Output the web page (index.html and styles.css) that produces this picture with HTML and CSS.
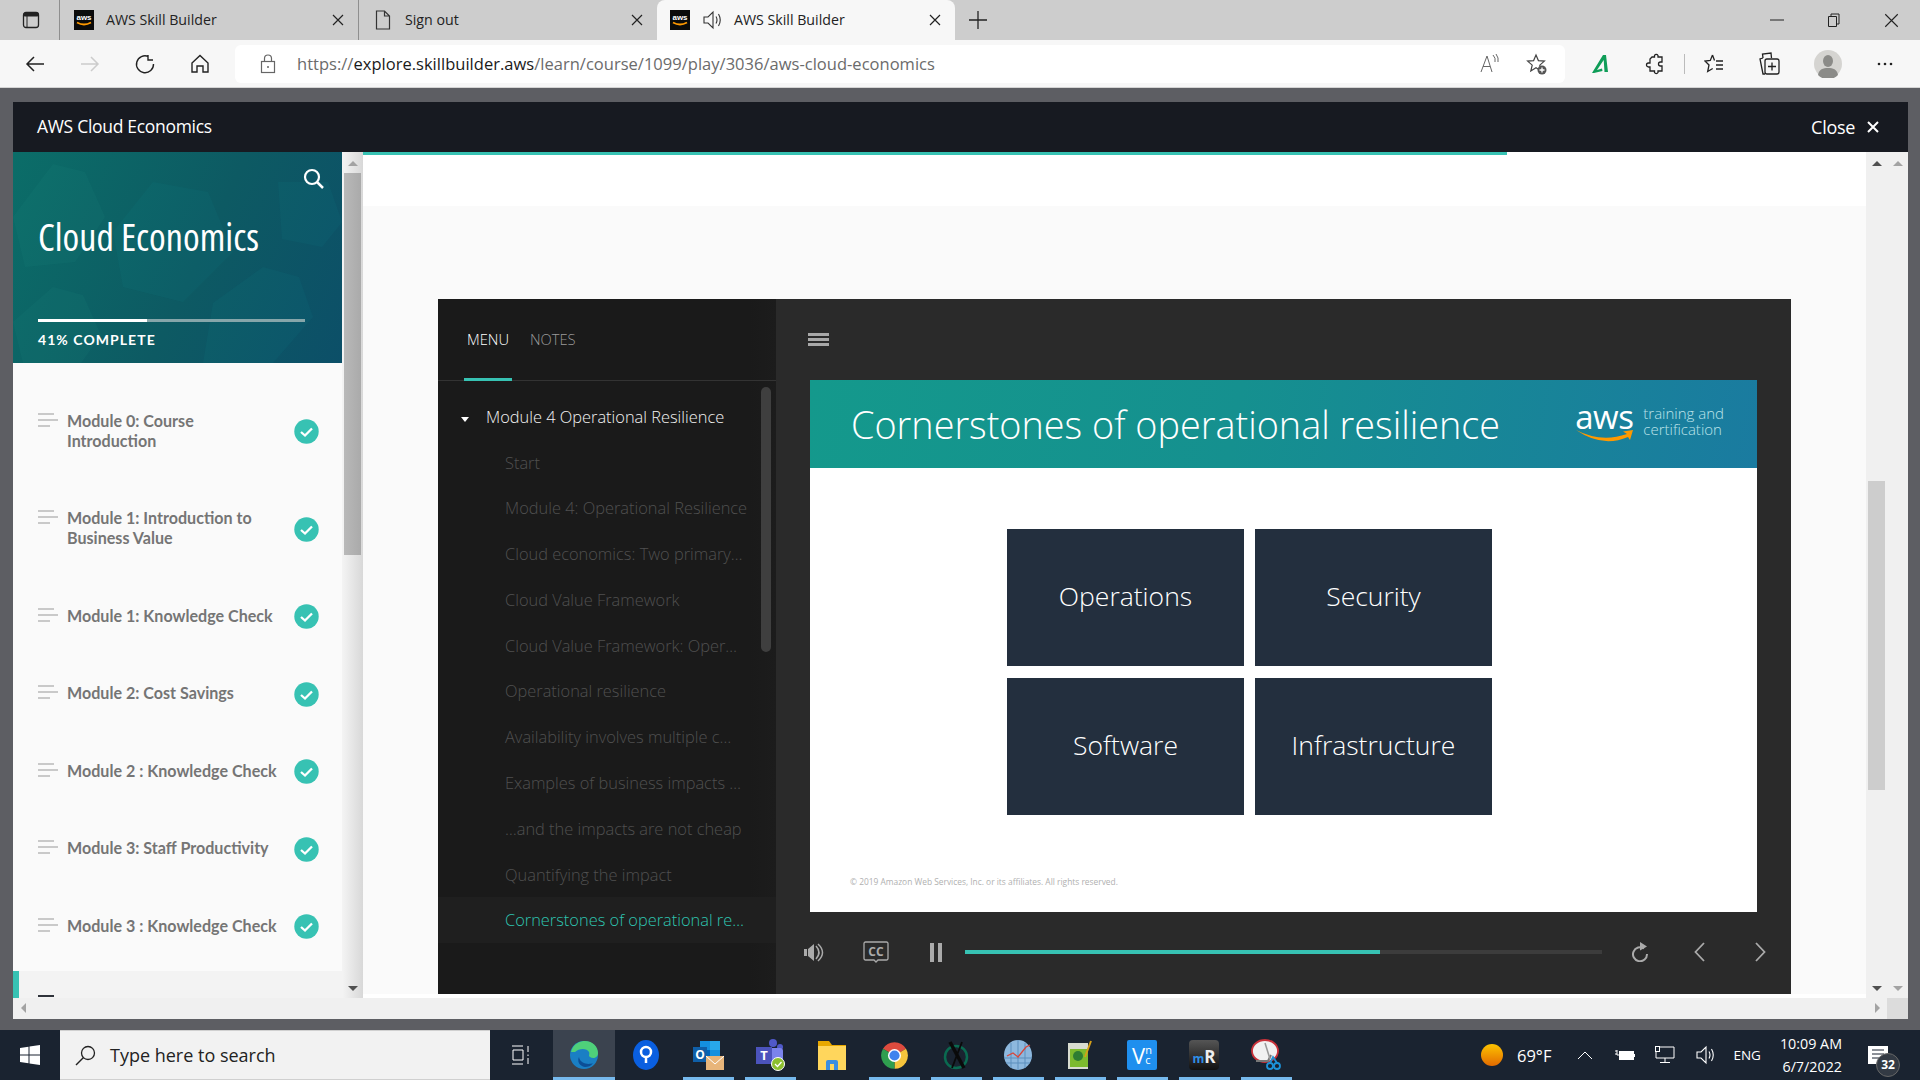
FILE: index.html
```html
<!DOCTYPE html>
<html lang="en">

<head>
    <meta charset="UTF-8">
    <title>AWS Skill Builder</title>
    <link rel="stylesheet" href="styles.css">
</head>

<body>
    <svg class="defs" width="0" height="0">
        <symbol id="close-x" viewBox="0 0 12 12">
            <path d="M1 1l10 10M11 1L1 11" fill="none" stroke="currentColor" />
        </symbol>
        <symbol id="check" viewBox="0 0 25 25">
            <circle cx="12.500" cy="12.500" r="12.200" fill="#37c2b3" />
            <path d="M7 13l4 3.500 7-7" fill="none" stroke="#fff" stroke-width="2.300" />
        </symbol>
        <symbol id="speaker-thin" viewBox="0 0 20 20">
            <path d="M2 7h4l5-5v16l-5-5H2z" fill="none" stroke="currentColor" stroke-width="1.100" />
            <path d="M14 6.500q2 3.500 0 7M16.500 4q3.500 6 0 12" fill="none" stroke="currentColor" stroke-width="1.100" />
        </symbol>
    </svg>

    <div class="tabstrip">
        <svg class="tab-pane-icon" width="18" height="18" viewBox="0 0 18 18">
            <rect x="1.500" y="1.500" width="15" height="15" rx="2.500" fill="none" stroke="#222" stroke-width="1.300" />
            <rect x="1.500" y="1.500" width="15" height="4" rx="1.500" fill="#222" />
            <path d="M5 5v11" stroke="#222" stroke-width="1" />
        </svg>
        <div class="tab">
            <svg class="fav" width="20" height="20" viewBox="0 0 20 20">
                <rect width="20" height="20" fill="#0b0b0b" />
                <text x="10" y="10" font-size="8" font-weight="700" fill="#fff" text-anchor="middle" font-family="Liberation Sans">aws</text>
                <path d="M3 12.500q7 4 14 0" fill="none" stroke="#f90" stroke-width="1.800" />
            </svg>
            <span class="tab-title">AWS Skill Builder</span>
            <svg class="tab-close" width="12" height="12" stroke-width="1.200"><use href="#close-x" /></svg>
        </div>
        <div class="tab">
            <svg class="fav" width="20" height="20" viewBox="0 0 20 20">
                <path d="M3.500 1h8l5 5v13h-13zM11.500 1v5h5" fill="none" stroke="#333" stroke-width="1.200" />
            </svg>
            <span class="tab-title">Sign out</span>
            <svg class="tab-close" width="12" height="12" stroke-width="1.200"><use href="#close-x" /></svg>
        </div>
        <div class="tab tab-active">
            <svg class="fav" width="20" height="20" viewBox="0 0 20 20">
                <rect width="20" height="20" fill="#0b0b0b" />
                <text x="10" y="10" font-size="8" font-weight="700" fill="#fff" text-anchor="middle" font-family="Liberation Sans">aws</text>
                <path d="M3 12.500q7 4 14 0" fill="none" stroke="#f90" stroke-width="1.800" />
            </svg>
            <svg class="tab-sound" width="20" height="20"><use href="#speaker-thin" /></svg>
            <span class="tab-title">AWS Skill Builder</span>
            <svg class="tab-close" width="12" height="12" stroke-width="1.200"><use href="#close-x" /></svg>
        </div>
        <svg class="tab-new" width="18" height="18" viewBox="0 0 18 18">
            <path d="M9 0v18M0 9h18" stroke="#222" stroke-width="1.300" />
        </svg>
        <div class="win-controls">
            <svg width="14" height="14" viewBox="0 0 14 14"><path d="M0 7h14" stroke="#222" stroke-width="1" /></svg>
            <svg width="14" height="14" viewBox="0 0 14 14">
                <path d="M1.500 3.500h8v10h-8zM4 3.500V1h8v10H9.500" fill="none" stroke="#222" stroke-width="1" />
            </svg>
            <svg width="15" height="15" stroke-width="0.900"><use href="#close-x" /></svg>
        </div>
    </div>

    <div class="toolbar">
        <svg class="nav-icon" width="20" height="20" viewBox="0 0 20 20">
            <path d="M19 10H2M9 3l-7 7 7 7" fill="none" stroke="#222" stroke-width="1.500" />
        </svg>
        <svg class="nav-icon" width="20" height="20" viewBox="0 0 20 20">
            <path d="M1 10h17M11 3l7 7-7 7" fill="none" stroke="#ccc" stroke-width="1.500" />
        </svg>
        <svg class="nav-icon" width="20" height="20" viewBox="0 0 20 20">
            <path d="M13.500 2.500A8.500 8.500 0 1 0 18.500 10M13 1v5h5" fill="none" stroke="#222" stroke-width="1.400" />
        </svg>
        <svg class="nav-icon" width="20" height="20" viewBox="0 0 20 20">
            <path d="M2 9l8-7.500L18 9v9h-5v-6H7v6H2z" fill="none" stroke="#222" stroke-width="1.400" />
        </svg>
        <div class="address">
            <svg class="lock" width="16" height="20" viewBox="0 0 16 20">
                <rect x="1.500" y="7.500" width="13" height="11" fill="none" stroke="#666" stroke-width="1.200" />
                <path d="M4.500 7.500V4.500a3.500 3.500 0 0 1 7 0v3" fill="none" stroke="#666" stroke-width="1.200" />
                <circle cx="8" cy="13" r="1" fill="#666" />
            </svg>
            <span class="url"><span class="url-dim">https://</span>explore.skillbuilder.aws<span class="url-dim">/learn/course/1099/play/3036/aws-cloud-economics</span></span>
            <svg class="addr-icon" width="20" height="22" viewBox="0 0 20 22">
                <path d="M1 19L7 3l5 16M3 13.500h7" fill="none" stroke="#666" stroke-width="1" />
                <path d="M13 2q3 3 2 7M16 1q3 4 2 8" fill="none" stroke="#666" stroke-width="1" />
            </svg>
            <svg class="addr-icon" width="22" height="22" viewBox="0 0 22 22">
                <path d="M10 2l2.400 5.600 6 .5-4.600 4 1.400 5.900-5.200-3.200L4.800 18l1.400-5.900-4.600-4 6-.5z" fill="none" stroke="#444" stroke-width="1.200" />
                <circle cx="16" cy="17" r="4.500" fill="#555" />
                <path d="M16 14.500v5M13.500 17h5" stroke="#fff" stroke-width="1.300" />
            </svg>
        </div>
        <div class="tool-icons">
            <svg width="20" height="20" viewBox="0 0 20 20">
                <path d="M1 19L12 1h3l2 17h-3.500l-.8-12L6 16l5-1.500 .5 2.500L3 19z" fill="#0f9d58" />
            </svg>
            <svg width="20" height="22" viewBox="0 0 20 22">
                <path d="M7 4h2.500V2.500a2 2 0 0 1 3.500 0V4h4v5h-1.500a2 2 0 0 0 0 4H17v5h-4v1.500a2 2 0 0 1-3.500 0V18H5v-4H3.500a2 2 0 0 1 0-4H5V6z" fill="none" stroke="#222" stroke-width="1.300" />
            </svg>
            <span class="tool-sep"></span>
            <svg width="20" height="22" viewBox="0 0 20 22">
                <path d="M8.500 2L6.300 7.500 1 8l4 4-1.300 6.500 5-3M8.500 2l2 5.500" fill="none" stroke="#222" stroke-width="1.300" />
                <path d="M12 8h7M12 12h7M12 16h7" stroke="#222" stroke-width="1.300" />
            </svg>
            <svg width="22" height="24" viewBox="0 0 22 24">
                <path d="M5 6L4.500 2 13 1l.5 5" fill="none" stroke="#222" stroke-width="1.300" />
                <path d="M5 6L2 7l3 15h2" fill="none" stroke="#222" stroke-width="1.300" />
                <rect x="7" y="7" width="14" height="15" rx="2" fill="none" stroke="#222" stroke-width="1.300" />
                <path d="M14 10.500v8M10 14.500h8" stroke="#222" stroke-width="1.300" />
            </svg>
            <svg width="28" height="28" viewBox="0 0 28 28">
                <circle cx="14" cy="14" r="14" fill="#d5d4d1" />
                <ellipse cx="14" cy="11" rx="5" ry="6" fill="#8b8b88" />
                <path d="M4 25c1-6 5-7 10-7s9 1 10 7a14 14 0 0 1-20 0z" fill="#8b8b88" />
            </svg>
            <svg width="18" height="4" viewBox="0 0 18 4">
                <circle cx="3" cy="2" r="1.300" fill="#222" />
                <circle cx="9" cy="2" r="1.300" fill="#222" />
                <circle cx="15" cy="2" r="1.300" fill="#222" />
            </svg>
        </div>
    </div>

    <div class="desktop">
        <div class="frame">
            <div class="frame-head">
                <span>AWS Cloud Economics</span>
                <span class="frame-close">Close
                    <svg width="12" height="12" stroke-width="2"><use href="#close-x" /></svg>
                </span>
            </div>

            <div class="frame-body">
                <div class="course-side">
                    <div class="course-head">
                        <svg class="hex-bg" width="329" height="211" viewBox="0 0 329 211">
                            <g fill="#1a8a7c" fill-opacity="0.14">
                                <path d="M40 12l32 8 20 45-30 45-50 5-12-50z" />
                                <path d="M40 135l30 8 18 40-20 28H10L0 170z" />
                            </g>
                            <g fill="#148a98" fill-opacity="0.1">
                                <path d="M140 30l55 10 25 60-50 50-60-15-10-55z" />
                                <path d="M250 115l36 10 14 40-40 46h-70l10-60z" />
                                <path d="M265 30l50 0 14 40-20 25-40-8z" />
                            </g>
                        </svg>
                        <svg class="course-search" width="21" height="21" viewBox="0 0 21 21">
                            <circle cx="9" cy="9" r="7" fill="none" stroke="#fff" stroke-width="2.200" />
                            <path d="M14 14l6 6" stroke="#fff" stroke-width="2.500" />
                        </svg>
                        <h1 class="course-title">Cloud Economics</h1>
                        <div class="course-bar"><div class="course-bar-fill"></div></div>
                        <div class="course-pct">41% COMPLETE</div>
                    </div>

                    <ul class="modules">
                        <li class="module">
                            <span class="bars"><i></i><i></i><i></i></span>
                            <span class="module-name">Module 0: Course Introduction</span>
                            <svg class="check" width="25" height="25"><use href="#check" /></svg>
                        </li>
                        <li class="module">
                            <span class="bars"><i></i><i></i><i></i></span>
                            <span class="module-name">Module 1: Introduction to Business Value</span>
                            <svg class="check" width="25" height="25"><use href="#check" /></svg>
                        </li>
                        <li class="module">
                            <span class="bars"><i></i><i></i><i></i></span>
                            <span class="module-name">Module 1: Knowledge Check</span>
                            <svg class="check" width="25" height="25"><use href="#check" /></svg>
                        </li>
                        <li class="module">
                            <span class="bars"><i></i><i></i><i></i></span>
                            <span class="module-name">Module 2: Cost Savings</span>
                            <svg class="check" width="25" height="25"><use href="#check" /></svg>
                        </li>
                        <li class="module">
                            <span class="bars"><i></i><i></i><i></i></span>
                            <span class="module-name">Module 2 : Knowledge Check</span>
                            <svg class="check" width="25" height="25"><use href="#check" /></svg>
                        </li>
                        <li class="module">
                            <span class="bars"><i></i><i></i><i></i></span>
                            <span class="module-name">Module 3: Staff Productivity</span>
                            <svg class="check" width="25" height="25"><use href="#check" /></svg>
                        </li>
                        <li class="module">
                            <span class="bars"><i></i><i></i><i></i></span>
                            <span class="module-name">Module 3 : Knowledge Check</span>
                            <svg class="check" width="25" height="25"><use href="#check" /></svg>
                        </li>
                        <li class="module module-current">
                            <span class="bars bars-dark"><i></i></span>
                        </li>
                    </ul>
                </div>

                <div class="vscroll side-scroll">
                    <span class="arrow-up"></span>
                    <div class="side-thumb"></div>
                    <span class="arrow-down arrow-dark"></span>
                </div>

                <div class="main">
                    <div class="lesson-progress"><div class="lesson-progress-fill"></div></div>
                    <div class="main-band"></div>
                    <div class="stage">
                        <div class="player">
                            <div class="player-side">
                                <div class="player-tabs">
                                    <span class="player-tab player-tab-on">MENU</span>
                                    <span class="player-tab">NOTES</span>
                                </div>
                                <div class="outline">
                                    <div class="outline-thumb"></div>
                                    <div class="outline-head"><span class="caret"></span>Module 4 Operational Resilience</div>
                                    <div class="outline-item">Start</div>
                                    <div class="outline-item">Module 4: Operational Resilience</div>
                                    <div class="outline-item">Cloud economics: Two primary…</div>
                                    <div class="outline-item">Cloud Value Framework</div>
                                    <div class="outline-item">Cloud Value Framework: Oper…</div>
                                    <div class="outline-item">Operational resilience</div>
                                    <div class="outline-item">Availability involves multiple c…</div>
                                    <div class="outline-item">Examples of business impacts …</div>
                                    <div class="outline-item">…and the impacts are not cheap</div>
                                    <div class="outline-item">Quantifying the impact</div>
                                    <div class="outline-item outline-item-on">Cornerstones of operational re…</div>
                                </div>
                            </div>

                            <div class="player-main">
                                <div class="player-top">
                                    <div class="hamburger"><i></i><i></i><i></i></div>
                                </div>
                                <div class="slide">
                                    <div class="slide-head">
                                        <h2 class="slide-title">Cornerstones of operational resilience</h2>
                                        <div class="aws-logo">
                                            <div class="aws-mark">
                                                <span class="aws-word">aws</span>
                                                <svg class="aws-swoosh" width="58" height="14" viewBox="0 0 58 14">
                                                    <path d="M1 1Q26 14 52 5L48 2.500 58 1 55 11 53 8Q27 19 1 1z" fill="#f90" />
                                                </svg>
                                            </div>
                                            <div class="aws-tag">training and<br>certification</div>
                                        </div>
                                    </div>
                                    <div class="slide-body">
                                        <div class="corner-grid">
                                            <div class="corner">Operations</div>
                                            <div class="corner">Security</div>
                                            <div class="corner">Software</div>
                                            <div class="corner">Infrastructure</div>
                                        </div>
                                        <div class="slide-legal">© 2019 Amazon Web Services, Inc. or its affiliates. All rights reserved.</div>
                                    </div>
                                </div>
                                <div class="controls">
                                    <svg class="ctl-sound" width="21" height="21" viewBox="0 0 21 21">
                                        <path d="M0 7h3v7H0zM4 7l6-5v17l-6-5z" fill="#aaa" />
                                        <path d="M12 4q6 6.500 0 13M14 2q9 8.500 0 17" fill="none" stroke="#aaa" stroke-width="1.500" />
                                    </svg>
                                    <svg class="ctl-cc" width="26" height="22" viewBox="0 0 26 22">
                                        <path d="M2.500 1h21a1.500 1.500 0 0 1 1.500 1.500v15a1.500 1.500 0 0 1-1.500 1.500H15l-2 2-2-2H2.500A1.500 1.500 0 0 1 1 17.500v-15A1.500 1.500 0 0 1 2.500 1z" fill="none" stroke="#aaa" stroke-width="1.300" />
                                        <text x="13" y="15" font-size="12" font-weight="700" fill="#aaa" text-anchor="middle" font-family="Open Sans">CC</text>
                                    </svg>
                                    <svg class="ctl-pause" width="12" height="19" viewBox="0 0 12 19">
                                        <path d="M0 0h4v19H0zM8 0h4v19H8z" fill="#aaa" />
                                    </svg>
                                    <div class="seek"><div class="seek-fill"></div></div>
                                    <svg class="ctl-replay" width="18" height="20" viewBox="0 0 18 20">
                                        <path d="M13 6.500A7 7 0 1 0 16 12" fill="none" stroke="#aaa" stroke-width="2" />
                                        <path d="M9 0l7 4.500-7 4z" fill="#aaa" />
                                    </svg>
                                    <svg class="ctl-prev" width="11" height="20" viewBox="0 0 11 20">
                                        <path d="M10 1L1.500 10l8.500 9" fill="none" stroke="#aaa" stroke-width="1.800" />
                                    </svg>
                                    <svg class="ctl-next" width="11" height="20" viewBox="0 0 11 20">
                                        <path d="M1 1l8.500 9L1 19" fill="none" stroke="#aaa" stroke-width="1.800" />
                                    </svg>
                                </div>
                            </div>
                        </div>
                    </div>
                    <div class="main-foot"></div>
                </div>

                <div class="vscroll main-scroll">
                    <span class="arrow-up arrow-dark"></span>
                    <div class="main-thumb"></div>
                    <span class="arrow-down arrow-dark"></span>
                </div>
                <div class="vscroll outer-scroll">
                    <span class="arrow-up"></span>
                    <span class="arrow-down"></span>
                </div>
            </div>

            <div class="hscroll">
                <span class="arrow-left"></span>
                <span class="arrow-right"></span>
                <span class="hscroll-corner"></span>
            </div>
        </div>
    </div>

    <div class="taskbar">
        <div class="start">
            <svg width="20" height="20" viewBox="0 0 20 20">
                <path d="M0 3l8.500-1.300V9.500H0zM9.500 1.500L20 0v9.500H9.500zM0 10.500h8.500v7.800L0 17zM9.500 10.500H20V20L9.500 18.500z" fill="#fff" />
            </svg>
        </div>
        <div class="search">
            <svg width="21" height="21" viewBox="0 0 21 21">
                <circle cx="13" cy="8" r="6.500" fill="none" stroke="#222" stroke-width="1.300" />
                <path d="M8.500 12.500L1 20" stroke="#222" stroke-width="1.500" />
            </svg>
            <span>Type here to search</span>
        </div>
        <div class="slot slot-view">
            <svg width="20" height="20" viewBox="0 0 20 20">
                <path d="M1 1h11M1 19h11M2 5h10v10H2zM17 1v6M17 9.500v1.500M17 13v6" fill="none" stroke="#fff" stroke-width="1" />
            </svg>
        </div>
        <div class="slot slot-active">
            <svg width="30" height="30" viewBox="0 0 30 30">
                <circle cx="15" cy="15" r="14" fill="#1a7fc4" />
                <path d="M2 12C4 3 12 1 16 1c8 0 13 6 13 12 0 5-5 6-8 4-2-1 0-3-1-5-2-4-10-4-14 0z" fill="#4fd07a" />
                <path d="M16 27c-6-1-8-6-6-10 1 7 10 8 14 6-2 3-5 4-8 4z" fill="#0c4e96" />
            </svg>
        </div>
        <div class="slot">
            <svg width="26" height="30" viewBox="0 0 26 30">
                <ellipse cx="13" cy="15" rx="13" ry="15" fill="#0a5fe0" />
                <circle cx="13" cy="12" r="5" fill="none" stroke="#fff" stroke-width="2.500" />
                <path d="M13 16v7" stroke="#fff" stroke-width="2.500" />
            </svg>
        </div>
        <div class="slot slot-open">
            <svg width="32" height="32" viewBox="0 0 32 32">
                <rect x="8" y="2" width="20" height="18" fill="#1490df" />
                <rect x="18" y="2" width="10" height="9" fill="#28a8ea" />
                <rect x="8" y="11" width="10" height="9" fill="#0364b8" />
                <rect x="1" y="8" width="14" height="15" fill="#0f5fa8" />
                <text x="8" y="20" font-size="12" font-weight="700" fill="#fff" text-anchor="middle" font-family="Open Sans">O</text>
                <rect x="14" y="17" width="18" height="14" fill="#e8b57a" />
                <path d="M14 17l9 8 9-8" fill="none" stroke="#fff" stroke-width="1" />
            </svg>
        </div>
        <div class="slot slot-open">
            <svg width="32" height="32" viewBox="0 0 32 32">
                <circle cx="19" cy="4" r="4" fill="#5059c9" />
                <circle cx="26" cy="8" r="3" fill="#5059c9" />
                <rect x="14" y="9" width="15" height="14" rx="3" fill="#7b83eb" />
                <rect x="2" y="8" width="16" height="17" fill="#4b53bc" />
                <text x="10" y="21" font-size="13" font-weight="700" fill="#fff" text-anchor="middle" font-family="Open Sans">T</text>
                <circle cx="24" cy="25" r="6.500" fill="#8cbf2f" stroke="#fff" />
                <path d="M21 25l2.500 2.500 4-4.500" fill="none" stroke="#fff" stroke-width="1.300" />
            </svg>
        </div>
        <div class="slot">
            <svg width="28" height="30" viewBox="0 0 28 30">
                <path d="M0 1h11l3 4h14v25H0z" fill="#e8a800" />
                <path d="M0 6h28v24H0z" fill="#ffd65c" />
                <path d="M8 30v-8a2 2 0 0 1 2-2h8a2 2 0 0 1 2 2v8h-4v-6h-4v6z" fill="#3a8ee0" />
            </svg>
        </div>
        <div class="slot slot-open">
            <svg width="29" height="29" viewBox="0 0 24 24">
                <path d="M12 12L2.470 6.500A11 11 0 0 1 21.530 6.500z" fill="#dd4b3e" />
                <path d="M12 12l9.530-5.500A11 11 0 0 1 12 23z" fill="#f6c43c" />
                <path d="M12 12v11A11 11 0 0 1 2.470 6.500z" fill="#2f9e4f" />
                <circle cx="12" cy="12" r="5.400" fill="#fff" />
                <circle cx="12" cy="12" r="4.200" fill="#3f82ee" />
            </svg>
        </div>
        <div class="slot slot-open">
            <svg width="30" height="30" viewBox="0 0 30 30">
                <circle cx="15" cy="17" r="11" fill="none" stroke="#0a6a50" stroke-width="2.500" />
                <path d="M9 2l14 26" stroke="#0a0a0a" stroke-width="3.500" />
                <path d="M21 2L11 28" stroke="#0a0a0a" stroke-width="1.800" />
            </svg>
        </div>
        <div class="slot slot-open">
            <svg width="30" height="32" viewBox="0 0 30 32">
                <ellipse cx="15" cy="16" rx="14" ry="15" fill="#8db8de" />
                <path d="M1 19h28M3 24h24M8 4v25M15 1v30M22 4v25" stroke="#5d8fbd" stroke-width="1" />
                <path d="M4 17l6-3 5 4 8-10 4-2" fill="none" stroke="#d8453a" stroke-width="1.300" />
            </svg>
        </div>
        <div class="slot slot-open">
            <svg width="28" height="32" viewBox="0 0 28 32">
                <rect x="2" y="4" width="20" height="26" fill="#d8dcd0" />
                <rect x="4" y="10" width="18" height="18" fill="#7cba2e" />
                <circle cx="12" cy="17" r="5" fill="#2e7d32" />
                <path d="M25 2l-6 16" stroke="#d6a018" stroke-width="2" />
            </svg>
        </div>
        <div class="slot slot-open">
            <div class="vnc-tile">V<span class="vnc-small">n<br>c</span></div>
        </div>
        <div class="slot slot-open">
            <div class="r-tile"><span class="r-m">m</span>R</div>
        </div>
        <div class="slot slot-open">
            <svg width="30" height="32" viewBox="0 0 30 32">
                <ellipse cx="14" cy="12" rx="13" ry="11" fill="#f1f1f1" stroke="#c9323a" stroke-width="1.800" />
                <path d="M5 22h12l3-6" fill="none" stroke="#777" stroke-width="2" />
                <path d="M14 4l5 16" stroke="#999" stroke-width="1.500" />
                <circle cx="19" cy="27" r="3" fill="none" stroke="#1d93d8" stroke-width="1.800" />
                <circle cx="26" cy="27" r="3" fill="none" stroke="#1d93d8" stroke-width="1.800" />
                <path d="M19 24l3-6 4 6" fill="none" stroke="#1d93d8" stroke-width="1.800" />
            </svg>
        </div>

        <div class="tray">
            <span class="sun"></span>
            <span class="temp">69°F</span>
            <svg class="tray-chevron" width="16" height="9" viewBox="0 0 16 9">
                <path d="M1 8l7-7 7 7" fill="none" stroke="#fff" stroke-width="1" />
            </svg>
            <svg class="tray-battery" width="20" height="12" viewBox="0 0 20 12">
                <path d="M0 2h2M0 5h2M2 1v5h3" fill="none" stroke="#fff" stroke-width="1" />
                <rect x="4.500" y="2.500" width="14" height="8" fill="#fff" stroke="#fff" />
                <path d="M19 5v3" stroke="#fff" stroke-width="2" />
            </svg>
            <svg class="tray-net" width="20" height="18" viewBox="0 0 20 18">
                <path d="M4 1h15v11H1M10 12v4M5 16.500h10M1 1v11" fill="none" stroke="#fff" stroke-width="1" />
                <rect x="0.500" y="0.500" width="4" height="5" fill="#1a2330" stroke="#fff" />
            </svg>
            <svg class="tray-sound" width="20" height="20"><use href="#speaker-thin" /></svg>
            <span class="tray-lang">ENG</span>
            <div class="clock">10:09 AM<br>6/7/2022</div>
            <div class="notify">
                <svg width="20" height="18" viewBox="0 0 20 18">
                    <path d="M0 0h20v18H0z" fill="#fff" />
                    <path d="M4 4h12M4 8h12M4 12h8" stroke="#1a2330" stroke-width="1" />
                </svg>
                <span class="notify-count">32</span>
            </div>
        </div>
    </div>
</body>

</html>
```

FILE: styles.css
```css
* {
    box-sizing: border-box;
}

html,
body {
    margin: 0;
    height: 1080px;
    overflow: hidden;
}

body {
    display: flex;
    flex-direction: column;
    width: 1920px;
    font-family: "Open Sans", sans-serif;
    background-color: #5d5e63;
}

svg {
    display: block;
    flex: none;
}

.defs {
    position: absolute;
}

ul {
    list-style: none;
    margin: 0;
    padding: 0;
}

/* browser chrome */
.tabstrip {
    display: flex;
    align-items: center;
    height: 40px;
    padding-left: 22px;
    background-color: #cdcdcd;
    color: #222;
}

.tab-pane-icon {
    margin-right: 19px;
}

.tab {
    display: flex;
    align-items: center;
    width: 299px;
    height: 40px;
    padding: 0 14px;
    border-left: 1px solid #8f8f8f;
    font-size: 14.200px;
}

.tab-active {
    width: 298px;
    padding: 0 14px 0 13px;
    border-left: none;
    border-radius: 8px 8px 0 0;
    background-color: #f7f7f7;
}

.fav {
    margin-right: 12px;
}

.tab-sound {
    margin-right: 12px;
    color: #333;
}

.tab-title {
    flex: 1;
    padding-bottom: 2px;
}

.tab-close {
    color: #222;
}

.tab-new {
    margin-left: 14px;
}

.win-controls {
    display: flex;
    align-items: center;
    gap: 43px;
    margin-left: auto;
    padding-right: 21px;
    color: #222;
}

.toolbar {
    display: flex;
    align-items: center;
    height: 48px;
    padding-left: 25px;
    background-color: #f7f7f7;
    border-bottom: 1px solid #d4d4d4;
}

.nav-icon {
    margin-right: 35px;
}

.address {
    display: flex;
    align-items: center;
    width: 1330px;
    height: 38px;
    margin-left: -10px;
    padding-left: 25px;
    border-radius: 6px;
    background-color: #fff;
}

.url {
    flex: 1;
    margin-left: 21px;
    font-size: 16.500px;
    letter-spacing: 0.02px;
    color: #1a1a1a;
}

.url-dim {
    color: #6b6b6b;
}

.addr-icon {
    margin-right: 26px;
}

.addr-icon:last-child {
    margin-right: 17px;
}

.tool-icons {
    display: flex;
    align-items: center;
    margin-left: 26px;
    gap: 34px;
}

.tool-sep {
    width: 1px;
    height: 20px;
    margin: 0 -15px;
    background-color: #bbb;
}

/* course window */
.desktop {
    flex: 1;
    min-height: 0;
    padding: 14px 12px 11px 13px;
}

.frame {
    display: flex;
    flex-direction: column;
    height: 100%;
    background-color: #fafafa;
}

.frame-head {
    display: flex;
    align-items: center;
    justify-content: space-between;
    height: 50px;
    padding: 0 29px 3px 24px;
    background-color: #171a21;
    color: #fff;
    font-size: 17.500px;
    letter-spacing: -0.3px;
}

.frame-close {
    display: flex;
    align-items: center;
    gap: 12px;
    font-size: 18px;
    margin-top: 3px;
}

.frame-body {
    flex: 1;
    display: flex;
    min-height: 0;
}

.course-side {
    width: 329px;
    overflow: hidden;
    background-color: #fafafa;
}

.course-head {
    position: relative;
    height: 211px;
    padding: 63px 37px 0 25px;
    overflow: hidden;
    background: linear-gradient(115deg, #0b6d68 0%, #0d5a63 55%, #0c4f68 100%);
    color: #fff;
}

.hex-bg {
    position: absolute;
    left: 0;
    top: 0;
}

.course-search {
    position: absolute;
    left: 290px;
    top: 16px;
}

.course-title {
    position: relative;
    margin: 0;
    font-size: 38px;
    font-stretch: 75%;
    line-height: 42px;
    font-weight: 500;
    white-space: nowrap;
}

.course-bar {
    position: relative;
    height: 3px;
    margin-top: 62px;
    background-color: #86a6aa;
}

.course-bar-fill {
    width: 41%;
    height: 100%;
    background-color: #fff;
}

.course-pct {
    position: relative;
    margin-top: 9px;
    font-family: Lato, sans-serif;
    font-size: 14px;
    font-weight: 700;
    letter-spacing: 1.050px;
    line-height: 18px;
}

.modules {
    padding-top: 19px;
}

.module {
    display: flex;
    align-items: center;
    padding: 28.750px 23px 28.750px 25px;
    font-family: Lato, sans-serif;
    font-size: 16.100px;
    line-height: 20px;
    font-weight: 700;
    color: #757575;
}

.module-name {
    flex: 1;
    margin-left: 9px;
    padding-right: 11px;
}

.check {
    margin: -2px 0 -4px;
}

.bars {
    display: flex;
    flex-direction: column;
    align-self: flex-start;
    gap: 4px;
    width: 20px;
    margin-top: 2px;
}

.bars i {
    display: block;
    width: 16px;
    height: 2px;
    background-color: #c9c9c9;
}

.bars i:nth-child(2) {
    width: 20px;
}

.bars i:nth-child(3) {
    width: 12px;
}

.bars-dark i {
    background-color: #2f333a;
}

.module-current {
    height: 60px;
    margin-top: 6px;
    padding: 24px 0 0 19px;
    border-left: 6px solid #37c2b3;
    background-color: #f3f3f3;
}

.module-current .bars {
    margin: 0;
}

/* scrollbars */
.vscroll {
    position: relative;
    flex: none;
    display: flex;
    flex-direction: column;
    width: 21px;
    background-color: #f0f0f0;
}

.side-scroll {
    background: linear-gradient(to right, #f4f4f4, #d8d8d8);
}

.side-thumb {
    position: absolute;
    left: 2px;
    top: 21px;
    width: 17px;
    height: 382px;
    background: linear-gradient(to right, #b9b9b9, #aaa);
}

.main-thumb {
    position: absolute;
    left: 2px;
    top: 329px;
    width: 17px;
    height: 309px;
    background-color: #cdcdcd;
}

.arrow-up,
.arrow-down {
    position: absolute;
    left: 6px;
    width: 0;
    height: 0;
    border-left: 5px solid transparent;
    border-right: 5px solid transparent;
}

.arrow-up {
    top: 9px;
    border-bottom: 5px solid #a3a3a3;
}

.arrow-down {
    bottom: 7px;
    border-top: 5px solid #a3a3a3;
}

.arrow-up.arrow-dark {
    border-bottom-color: #505050;
}

.arrow-down.arrow-dark {
    border-top-color: #505050;
}

.hscroll {
    position: relative;
    flex: none;
    height: 21px;
    background-color: #f0f0f0;
}

.arrow-left,
.arrow-right {
    position: absolute;
    top: 5px;
    width: 0;
    height: 0;
    border-top: 5px solid transparent;
    border-bottom: 5px solid transparent;
}

.arrow-left {
    left: 8px;
    border-right: 5px solid #a3a3a3;
}

.arrow-right {
    right: 28px;
    border-left: 5px solid #a3a3a3;
}

.hscroll-corner {
    position: absolute;
    right: 0;
    top: 0;
    width: 21px;
    height: 21px;
    background-color: #dcdcdc;
}

/* main column */
.main {
    flex: 1;
    min-width: 0;
    display: flex;
    flex-direction: column;
    background-color: #fafafa;
}

.lesson-progress {
    flex: none;
    height: 3px;
    background-color: #fff;
}

.lesson-progress-fill {
    width: 76.1%;
    height: 100%;
    background-color: #37c2b3;
}

.main-band {
    flex: none;
    height: 51px;
    background-color: #fff;
}

.stage {
    flex: none;
    height: 788px;
    padding: 93px 0 0 75px;
}

.main-foot {
    flex: 1;
    background-color: #fff;
}

.player {
    display: flex;
    width: 1353px;
    height: 695px;
    background-color: #2a2a2a;
}

.player-side {
    flex: none;
    width: 338px;
    background: linear-gradient(to right, #1a1a1a 92%, #1c1c1c);
}

.player-tabs {
    display: flex;
    gap: 15px;
    height: 82px;
    padding-left: 26px;
    border-bottom: 1px solid #333;
}

.player-tab {
    height: 82px;
    padding: 30px 3px 0;
    font-size: 14.700px;
    font-weight: 300;
    color: #9a9a9a;
}

.player-tab-on {
    border-bottom: 3px solid #37c2b3;
    color: #fff;
}

.outline {
    position: relative;
    padding-top: 12px;
    font-size: 16.400px;
    font-weight: 300;
}

.outline-thumb {
    position: absolute;
    left: 323px;
    top: 6px;
    width: 10px;
    height: 265px;
    border-radius: 5px;
    background-color: #3f3f3f;
}

.outline-head {
    display: flex;
    align-items: center;
    height: 46.500px;
    padding-left: 23px;
    color: #f2f2f2;
}

.caret {
    width: 0;
    height: 0;
    margin-right: 17px;
    margin-top: 6px;
    border-left: 4px solid transparent;
    border-right: 4px solid transparent;
    border-top: 5px solid #fff;
}

.outline-item {
    height: 45.800px;
    padding-left: 67px;
    line-height: 45.800px;
    white-space: nowrap;
    color: #505050;
}

.outline-item-on {
    background-color: #1f1f1f;
    color: #2ec4b0;
}

.player-main {
    flex: 1;
    padding: 0 34px;
    min-width: 0;
}

.player-top {
    display: flex;
    align-items: center;
    height: 81px;
}

.hamburger {
    display: flex;
    flex-direction: column;
    gap: 2px;
    width: 21px;
    margin-left: -2px;
}

.hamburger i {
    display: block;
    height: 3px;
    background-color: #a8a8a8;
}

.slide {
    height: 532px;
    background-color: #fff;
}

.slide-head {
    display: flex;
    align-items: center;
    justify-content: space-between;
    height: 88px;
    padding: 0 33px 0 41px;
    background: linear-gradient(100deg, #14998c 0%, #15908f 45%, #1a7ba0 100%);
    color: #fff;
}

.slide-title {
    margin: 0;
    font-size: 37.800px;
    font-weight: 300;
}

.aws-logo {
    display: flex;
    align-items: flex-start;
    gap: 10px;
}

.aws-mark {
    position: relative;
    width: 58px;
    height: 40px;
}

.aws-word {
    display: block;
    font-size: 33px;
    line-height: 26px;
    font-weight: 400;
    text-align: center;
    letter-spacing: -0.5px;
    color: #fff;
}

.aws-swoosh {
    position: absolute;
    left: 0;
    top: 25px;
}

.aws-tag {
    margin-top: 1px;
    font-size: 15px;
    line-height: 16px;
    font-weight: 300;
    color: #bde3ea;
}

.slide-body {
    height: 444px;
    padding: 61px 0 0 197px;
}

.corner-grid {
    display: grid;
    grid-template-columns: 237px 237px;
    grid-template-rows: 137px 137px;
    gap: 12px 11px;
}

.corner {
    display: flex;
    align-items: center;
    justify-content: center;
    padding-bottom: 4px;
    background-color: #232f3e;
    color: #fff;
    font-size: 26.500px;
    font-weight: 300;
}

.slide-legal {
    margin: 61px 0 0 -157px;
    font-size: 8.400px;
    color: #b0b0b0;
}

.controls {
    display: flex;
    align-items: center;
    height: 82px;
    padding-bottom: 2px;
}

.ctl-sound {
    margin-left: -6px;
}

.ctl-cc {
    margin-left: 38px;
}

.ctl-pause {
    margin-left: 41px;
}

.seek {
    flex: none;
    width: 637px;
    height: 4px;
    margin-left: 23px;
    background-color: #3c3c3c;
}

.seek-fill {
    width: 65.200%;
    height: 100%;
    background-color: #37c2b3;
}

.ctl-replay {
    margin-left: 29px;
}

.ctl-prev {
    margin-left: 45px;
}

.ctl-next {
    margin-left: 50px;
}

/* taskbar */
.taskbar {
    flex: none;
    display: flex;
    align-items: stretch;
    height: 50px;
    background-color: #1a2330;
    color: #fff;
}

.start {
    display: flex;
    align-items: center;
    justify-content: center;
    width: 60px;
}

.search {
    display: flex;
    align-items: center;
    gap: 14px;
    width: 430px;
    padding-left: 15px;
    border-top: 1px solid #d0d0d0;
    border-bottom: 1px solid #d0d0d0;
    background-color: #f2f2f2;
    color: #222;
    font-size: 18px;
}

.slot {
    display: flex;
    align-items: center;
    justify-content: center;
    flex: none;
    width: 62px;
}

.slot-view {
    width: 63px;
    padding-right: 2px;
}

.slot-active {
    background: linear-gradient(#76b9ed, #76b9ed) no-repeat bottom / 100% 3px, #3b434f;
}

.slot-open {
    background: linear-gradient(#76b9ed, #76b9ed) no-repeat bottom / 51px 3px;
}

.vnc-tile {
    display: flex;
    align-items: center;
    justify-content: center;
    width: 30px;
    height: 30px;
    border-radius: 2px;
    background-color: #1f8fee;
    font-size: 22px;
    line-height: 1;
    color: #fff;
}

.vnc-small {
    font-size: 11px;
    line-height: 10px;
}

.r-tile {
    display: flex;
    align-items: flex-end;
    justify-content: center;
    width: 30px;
    height: 30px;
    padding-bottom: 5px;
    border-radius: 4px;
    background: linear-gradient(#555, #111);
    font-size: 17px;
    line-height: 17px;
    font-weight: 700;
    color: #eee;
}

.r-m {
    font-size: 12px;
    line-height: 12px;
    color: #2f8fe8;
}

.tray {
    display: flex;
    align-items: center;
    margin-left: auto;
    padding-right: 32px;
}

.sun {
    width: 22px;
    height: 22px;
    border-radius: 50%;
    background: linear-gradient(#fdc400, #e36a00);
}

.temp {
    margin-left: 14px;
    font-size: 16.500px;
}

.tray-chevron {
    margin-left: 26px;
}

.tray-battery {
    margin-left: 22px;
}

.tray-net {
    margin-left: 20px;
}

.tray-sound {
    margin-left: 20px;
    color: #fff;
}

.tray-lang {
    margin-left: 18px;
    font-size: 13.500px;
}

.clock {
    margin-left: 19px;
    font-size: 14.300px;
    line-height: 23px;
    text-align: right;
}

.notify {
    position: relative;
    width: 46px;
    padding-left: 26px;
}

.notify-count {
    position: absolute;
    left: 34px;
    top: 7px;
    width: 24px;
    height: 24px;
    border-radius: 50%;
    border: 1px solid #666;
    background-color: #333a44;
    font-size: 12px;
    font-weight: 700;
    line-height: 22px;
    text-align: center;
}
```
